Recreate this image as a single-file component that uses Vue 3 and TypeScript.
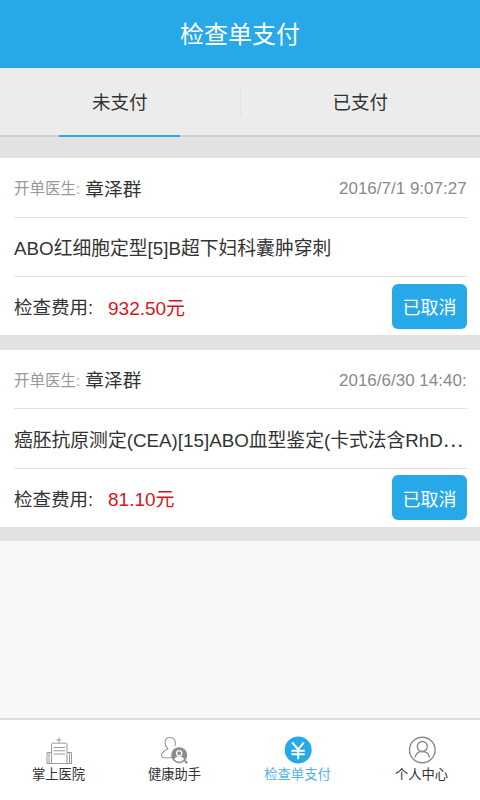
<script setup lang="ts">
interface Order {
  doctor: string
  time: string
  item: string
  fee: string
}

const orders: Order[] = [
  { doctor: '章泽群', time: '2016/7/1 9:07:27', item: 'ABO红细胞定型[5]B超下妇科囊肿穿刺', fee: '932.50元' },
  { doctor: '章泽群', time: '2016/6/30 14:40:15', item: '癌胚抗原测定(CEA)[15]ABO血型鉴定(卡式法含RhD⋯', fee: '81.10元' },
]
</script>

<template>
  <div class="page">
    <header class="head">检查单支付</header>
    <nav class="tabs">
      <div class="tab active"><span>未支付</span></div>
      <div class="sep"></div>
      <div class="tab"><span>已支付</span></div>
    </nav>
    <main class="list">
      <section v-for="o in orders" :key="o.time" class="card">
        <div class="row top">
          <span class="label">开单医生:</span>
          <span class="doc">{{ o.doctor }}</span>
          <span class="time">{{ o.time }}</span>
        </div>
        <div class="row item">{{ o.item }}</div>
        <div class="row fee">
          <span class="fee-label">检查费用:</span>
          <span class="amount">{{ o.fee }}</span>
          <button class="btn">已取消</button>
        </div>
      </section>
    </main>
    <footer class="bar">
      <div class="nav">
        <svg class="ic" viewBox="0 0 30 30" fill="none" stroke="#9c9c9c" stroke-width="1">
          <path d="M15 2.500v5.700M12.500 5h5M7.500 28.500V9.200a1 1 0 0 1 1-1h13.500a1 1 0 0 1 1 1v19.300" />
          <path d="M9.500 12.500h11.500M9.500 15.800h11.500M9.500 19h11.500M3 28.500V17.500h4.500M5 17.500v11M27.500 28.500V17.500H23M25.500 17.500v11M2.500 28.500h25.500" />
        </svg>
        <span>掌上医院</span>
      </div>
      <div class="nav">
        <svg class="ic" viewBox="0 0 30 30" fill="none">
          <path d="M13 22.800H5c-3 0-4.200-2-3.200-4 1.200-2.500 4-3.300 6-5-1.800-2-3-4.300-2.800-7 .2-3 2.500-4.300 5-4.300s4.800 1.500 5.300 4.300c.3 1.500.1 3-.4 4.300" stroke="#9a9a9a" stroke-width="1.100" />
          <circle cx="19.200" cy="20.200" r="8" fill="#8c8c8c" />
          <circle cx="19.200" cy="18.300" r="2.600" stroke="#fff" stroke-width="1.200" />
          <path d="M14.300 24.300c.8-2.100 2.800-3 4.900-3s4.100.9 4.900 3a6.200 6.200 0 0 1-9.800 0z" fill="#fff" />
          <path d="M24.800 25.800l2.400 2.400" stroke="#8c8c8c" stroke-width="2" />
        </svg>
        <span>健康助手</span>
      </div>
      <div class="nav on">
        <svg class="ic" viewBox="0 0 30 30" fill="none">
          <circle cx="15.200" cy="15" r="13.500" fill="#27a9e9" />
          <path d="M9.200 7.500L15.200 14.500L20.800 7.500M8.500 15.800h13.300M8.500 19.200h13.300M15.200 14.500V24.200" stroke="#fff" stroke-width="2" />
        </svg>
        <span>检查单支付</span>
      </div>
      <div class="nav">
        <svg class="ic" viewBox="0 0 30 30" fill="none" stroke="#8a8a8a" stroke-width="1.400">
          <circle cx="15.300" cy="15" r="12.800" />
          <circle cx="15.300" cy="11.500" r="5" />
          <path d="M8 22.500c.8-3.700 3.500-6 7.300-6s6.500 2.300 7.300 6" />
        </svg>
        <span>个人中心</span>
      </div>
    </footer>
  </div>
</template>

<style scoped>
.page {
  width: 480px;
  height: 800px;
  display: flex;
  flex-direction: column;
  background: #f8f8f8;
  font-family: "Liberation Sans", "Noto Sans CJK SC", sans-serif;
  overflow: hidden;
}
.head {
  height: 68px;
  flex: none;
  background: #27a9e9;
  color: #fff;
  font-size: 24px;
  line-height: 70px;
  text-align: center;
}
.tabs {
  height: 69px;
  flex: none;
  display: flex;
  align-items: stretch;
  background: #ececec;
  border-bottom: 2px solid #cfcfcf;
  box-sizing: border-box;
}
.tab {
  flex: 1;
  display: flex;
  justify-content: center;
  font-size: 18.500px;
  color: #333;
}
.tab span {
  width: 121px;
  height: 67px;
  margin-bottom: -2px;
  line-height: 69px;
  text-align: center;
  box-sizing: border-box;
}
.tab.active span {
  height: 69px;
  border-bottom: 2px solid #27a9e9;
}
.sep {
  width: 1px;
  height: 28px;
  margin-top: 20px;
  background: #e2e2e2;
}
.list {
  flex: 1;
  display: flex;
  flex-direction: column;
  gap: 14.400px;
  padding: 21.300px 0 14px;
  background: #f8f8f8;
  background-image: linear-gradient(#e2e2e2, #e2e2e2);
  background-repeat: no-repeat;
  background-size: 100% 404px;
}
.card {
  height: 177px;
  flex: none;
  box-sizing: border-box;
  padding: 0 13px 0 14px;
  background: #fff;
  display: flex;
  flex-direction: column;
}
.row {
  display: flex;
  align-items: center;
}
.top {
  height: 59.400px;
  flex: none;
  border-bottom: 1px solid #e2e2e2;
  box-sizing: border-box;
}
.label {
  font-size: 15.500px;
  color: #999;
}
.doc {
  margin-left: 5px;
  font-size: 18.700px;
  color: #333;
}
.time {
  margin-left: auto;
  margin-top: 4px;
  width: 128px;
  overflow: hidden;
  white-space: nowrap;
  font-size: 17px;
  color: #8a8a8a;
}
.item {
  height: 59.500px;
  flex: none;
  box-sizing: border-box;
  border-bottom: 1px solid #e2e2e2;
  font-size: 18.800px;
  color: #333;
  white-space: nowrap;
  overflow: hidden;
}
.fee {
  flex: 1;
}
.fee-label {
  width: 94px;
  font-size: 18.500px;
  color: #333;
}
.amount {
  font-size: 19px;
  color: #d9141c;
}
.btn {
  margin-left: auto;
  width: 75px;
  height: 45px;
  padding: 0;
  border: 0;
  border-radius: 6px;
  background: #27a9e9;
  color: #fff;
  font: inherit;
  font-size: 18px;
}
.bar {
  height: 82px;
  flex: none;
  box-sizing: border-box;
  display: grid;
  grid-template-columns: 117px 115px 131px 117px;
  background: #fff;
  border-top: 2px solid #dedede;
  padding-top: 14.500px;
}
.nav {
  display: flex;
  flex-direction: column;
  align-items: center;
  font-size: 13.300px;
  line-height: 18px;
  color: #333;
}
.nav.on {
  color: #4fb3e6;
}
.ic {
  width: 30px;
  height: 30px;
  margin-bottom: 1.500px;
}
</style>
